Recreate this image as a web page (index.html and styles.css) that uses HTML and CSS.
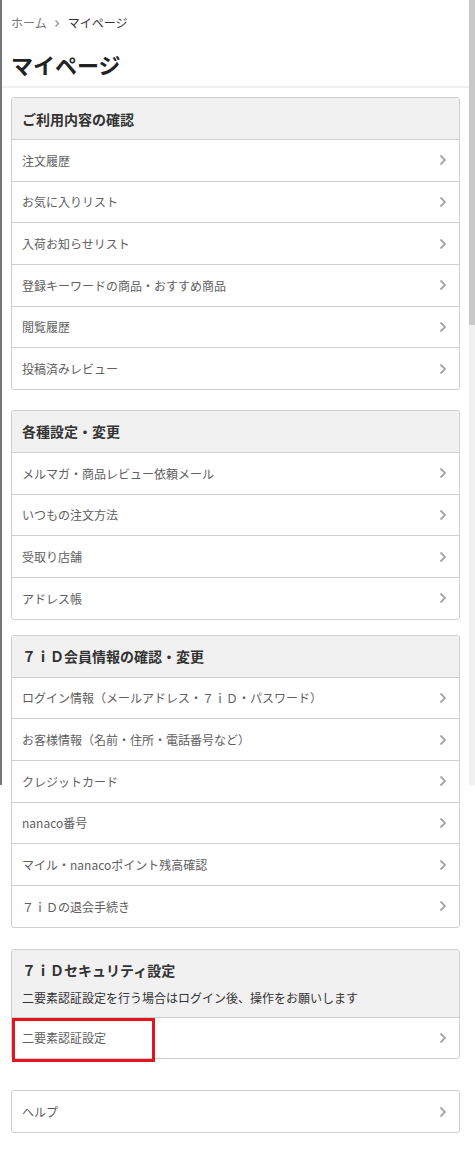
FILE: index.html
```html
<!DOCTYPE html>
<html lang="ja">
<head>
<meta charset="utf-8">
<title>マイページ</title>
<link rel="stylesheet" href="styles.css">
</head>
<body>
<div class="frame-line"></div>
<div class="scrollbar"><div class="thumb"></div></div>
<div class="page">
  <nav class="breadcrumb">
    <span class="crumb-home">ホーム</span>
    <svg class="crumb-sep" width="6" height="9" viewBox="0 0 6 9"><polyline points="1.5,1.5 4.5,4.5 1.5,7.5" fill="none" stroke="#999" stroke-width="1.4"/></svg>
    <span class="crumb-current">マイページ</span>
  </nav>
  <h1 class="title">マイページ</h1>
  <div class="divider"></div>

  <div class="cards">
    <section class="card card-1">
      <div class="card-head">ご利用内容の確認</div>
      <a class="row"><span>注文履歴</span><svg class="chev" width="8" height="12" viewBox="0 0 8 12"><polyline points="1.5,1.5 6,6 1.5,10.5" fill="none" stroke="#a6a6a6" stroke-width="1.8"/></svg></a>
      <a class="row"><span>お気に入りリスト</span><svg class="chev" width="8" height="12" viewBox="0 0 8 12"><polyline points="1.5,1.5 6,6 1.5,10.5" fill="none" stroke="#a6a6a6" stroke-width="1.8"/></svg></a>
      <a class="row"><span>入荷お知らせリスト</span><svg class="chev" width="8" height="12" viewBox="0 0 8 12"><polyline points="1.5,1.5 6,6 1.5,10.5" fill="none" stroke="#a6a6a6" stroke-width="1.8"/></svg></a>
      <a class="row"><span>登録キーワードの商品・おすすめ商品</span><svg class="chev" width="8" height="12" viewBox="0 0 8 12"><polyline points="1.5,1.5 6,6 1.5,10.5" fill="none" stroke="#a6a6a6" stroke-width="1.8"/></svg></a>
      <a class="row"><span>閲覧履歴</span><svg class="chev" width="8" height="12" viewBox="0 0 8 12"><polyline points="1.5,1.5 6,6 1.5,10.5" fill="none" stroke="#a6a6a6" stroke-width="1.8"/></svg></a>
      <a class="row"><span>投稿済みレビュー</span><svg class="chev" width="8" height="12" viewBox="0 0 8 12"><polyline points="1.5,1.5 6,6 1.5,10.5" fill="none" stroke="#a6a6a6" stroke-width="1.8"/></svg></a>
    </section>

    <section class="card card-2">
      <div class="card-head">各種設定・変更</div>
      <a class="row"><span>メルマガ・商品レビュー依頼メール</span><svg class="chev" width="8" height="12" viewBox="0 0 8 12"><polyline points="1.5,1.5 6,6 1.5,10.5" fill="none" stroke="#a6a6a6" stroke-width="1.8"/></svg></a>
      <a class="row"><span>いつもの注文方法</span><svg class="chev" width="8" height="12" viewBox="0 0 8 12"><polyline points="1.5,1.5 6,6 1.5,10.5" fill="none" stroke="#a6a6a6" stroke-width="1.8"/></svg></a>
      <a class="row"><span>受取り店舗</span><svg class="chev" width="8" height="12" viewBox="0 0 8 12"><polyline points="1.5,1.5 6,6 1.5,10.5" fill="none" stroke="#a6a6a6" stroke-width="1.8"/></svg></a>
      <a class="row"><span>アドレス帳</span><svg class="chev" width="8" height="12" viewBox="0 0 8 12"><polyline points="1.5,1.5 6,6 1.5,10.5" fill="none" stroke="#a6a6a6" stroke-width="1.8"/></svg></a>
    </section>

    <section class="card card-3">
      <div class="card-head">７ｉＤ会員情報の確認・変更</div>
      <a class="row"><span>ログイン情報（メールアドレス・７ｉＤ・パスワード）</span><svg class="chev" width="8" height="12" viewBox="0 0 8 12"><polyline points="1.5,1.5 6,6 1.5,10.5" fill="none" stroke="#a6a6a6" stroke-width="1.8"/></svg></a>
      <a class="row"><span>お客様情報（名前・住所・電話番号など）</span><svg class="chev" width="8" height="12" viewBox="0 0 8 12"><polyline points="1.5,1.5 6,6 1.5,10.5" fill="none" stroke="#a6a6a6" stroke-width="1.8"/></svg></a>
      <a class="row"><span>クレジットカード</span><svg class="chev" width="8" height="12" viewBox="0 0 8 12"><polyline points="1.5,1.5 6,6 1.5,10.5" fill="none" stroke="#a6a6a6" stroke-width="1.8"/></svg></a>
      <a class="row"><span>nanaco番号</span><svg class="chev" width="8" height="12" viewBox="0 0 8 12"><polyline points="1.5,1.5 6,6 1.5,10.5" fill="none" stroke="#a6a6a6" stroke-width="1.8"/></svg></a>
      <a class="row"><span>マイル・nanacoポイント残高確認</span><svg class="chev" width="8" height="12" viewBox="0 0 8 12"><polyline points="1.5,1.5 6,6 1.5,10.5" fill="none" stroke="#a6a6a6" stroke-width="1.8"/></svg></a>
      <a class="row"><span>７ｉＤの退会手続き</span><svg class="chev" width="8" height="12" viewBox="0 0 8 12"><polyline points="1.5,1.5 6,6 1.5,10.5" fill="none" stroke="#a6a6a6" stroke-width="1.8"/></svg></a>
    </section>

    <section class="card card-4">
      <div class="card-head card-head-tall">
        <div>７ｉＤセキュリティ設定</div>
        <p class="card-note">二要素認証設定を行う場合はログイン後、操作をお願いします</p>
      </div>
      <a class="row row-marked"><span>二要素認証設定</span><svg class="chev" width="8" height="12" viewBox="0 0 8 12"><polyline points="1.5,1.5 6,6 1.5,10.5" fill="none" stroke="#a6a6a6" stroke-width="1.8"/></svg><i class="mark"></i></a>
    </section>

    <section class="card card-5">
      <a class="row row-first"><span>ヘルプ</span><svg class="chev" width="8" height="12" viewBox="0 0 8 12"><polyline points="1.5,1.5 6,6 1.5,10.5" fill="none" stroke="#a6a6a6" stroke-width="1.8"/></svg></a>
    </section>
  </div>
</div>
</body>
</html>
```

FILE: styles.css
```css
* { box-sizing: border-box; }

html, body {
  margin: 0;
  padding: 0;
  background: #fff;
}

body {
  font-family: "Noto Sans CJK JP", "Noto Sans", "Liberation Sans", sans-serif;
  color: #333;
  position: relative;
  width: 475px;
}

.frame-line {
  position: absolute;
  left: 0;
  top: 0;
  width: 2px;
  height: 785px;
  background: #777;
}

.scrollbar {
  position: absolute;
  left: 469px;
  top: 0;
  width: 6px;
  height: 785px;
  background: #f1f1f1;
}

.thumb {
  height: 325px;
  background: #c8c8c8;
}

.page {
  width: 469px;
}

.breadcrumb {
  display: flex;
  align-items: center;
  gap: 6px;
  padding: 14px 11px 0;
  font-size: 12px;
  line-height: 18px;
}

.crumb-home { color: #777; }
.crumb-current { color: #333; }
.crumb-sep { margin: 0 2px 0 1px; }

.title {
  margin: 17px 0 0 11px;
  font-size: 22px;
  line-height: 30px;
  font-weight: 700;
  color: #222;
  letter-spacing: 0;
}

.divider {
  margin-top: 7px;
  height: 2px;
  background: #f0f0f0;
}

.cards {
  display: flex;
  flex-direction: column;
  padding: 9px 9px 40px 11px;
}

.card {
  border: 1px solid #cfcfcf;
  border-radius: 3px;
  overflow: visible;
}

.card-2 { margin-top: 20px; }
.card-3 { margin-top: 15px; }
.card-4 { margin-top: 21px; }
.card-5 { margin-top: 31px; }

.card-head {
  background: #f1f1f1;
  height: 41px;
  display: flex;
  align-items: center;
  padding: 0 10px;
  font-size: 14px;
  font-weight: 700;
  color: #333;
  border-radius: 3px 3px 0 0;
}

.card-head-tall {
  height: 67px;
  flex-direction: column;
  align-items: flex-start;
  justify-content: flex-start;
  padding-top: 10px;
  line-height: 20px;
}

.card-note {
  margin: 9px 0 0;
  font-size: 12px;
  font-weight: 400;
  color: #333;
  line-height: 18px;
}

.row {
  position: relative;
  display: flex;
  align-items: center;
  justify-content: space-between;
  height: 41.67px;
  padding: 0 12px 0 10px;
  border-top: 1px solid #cfcfcf;
  font-size: 12px;
  color: #606060;
  text-decoration: none;
}

.row-first {
  border-top: 0;
  height: 41px;
}

.chev { flex: none; }

.mark {
  position: absolute;
  left: 0;
  top: 0;
  width: 143px;
  height: 44px;
  border: 3px solid #e3141c;
}
```
